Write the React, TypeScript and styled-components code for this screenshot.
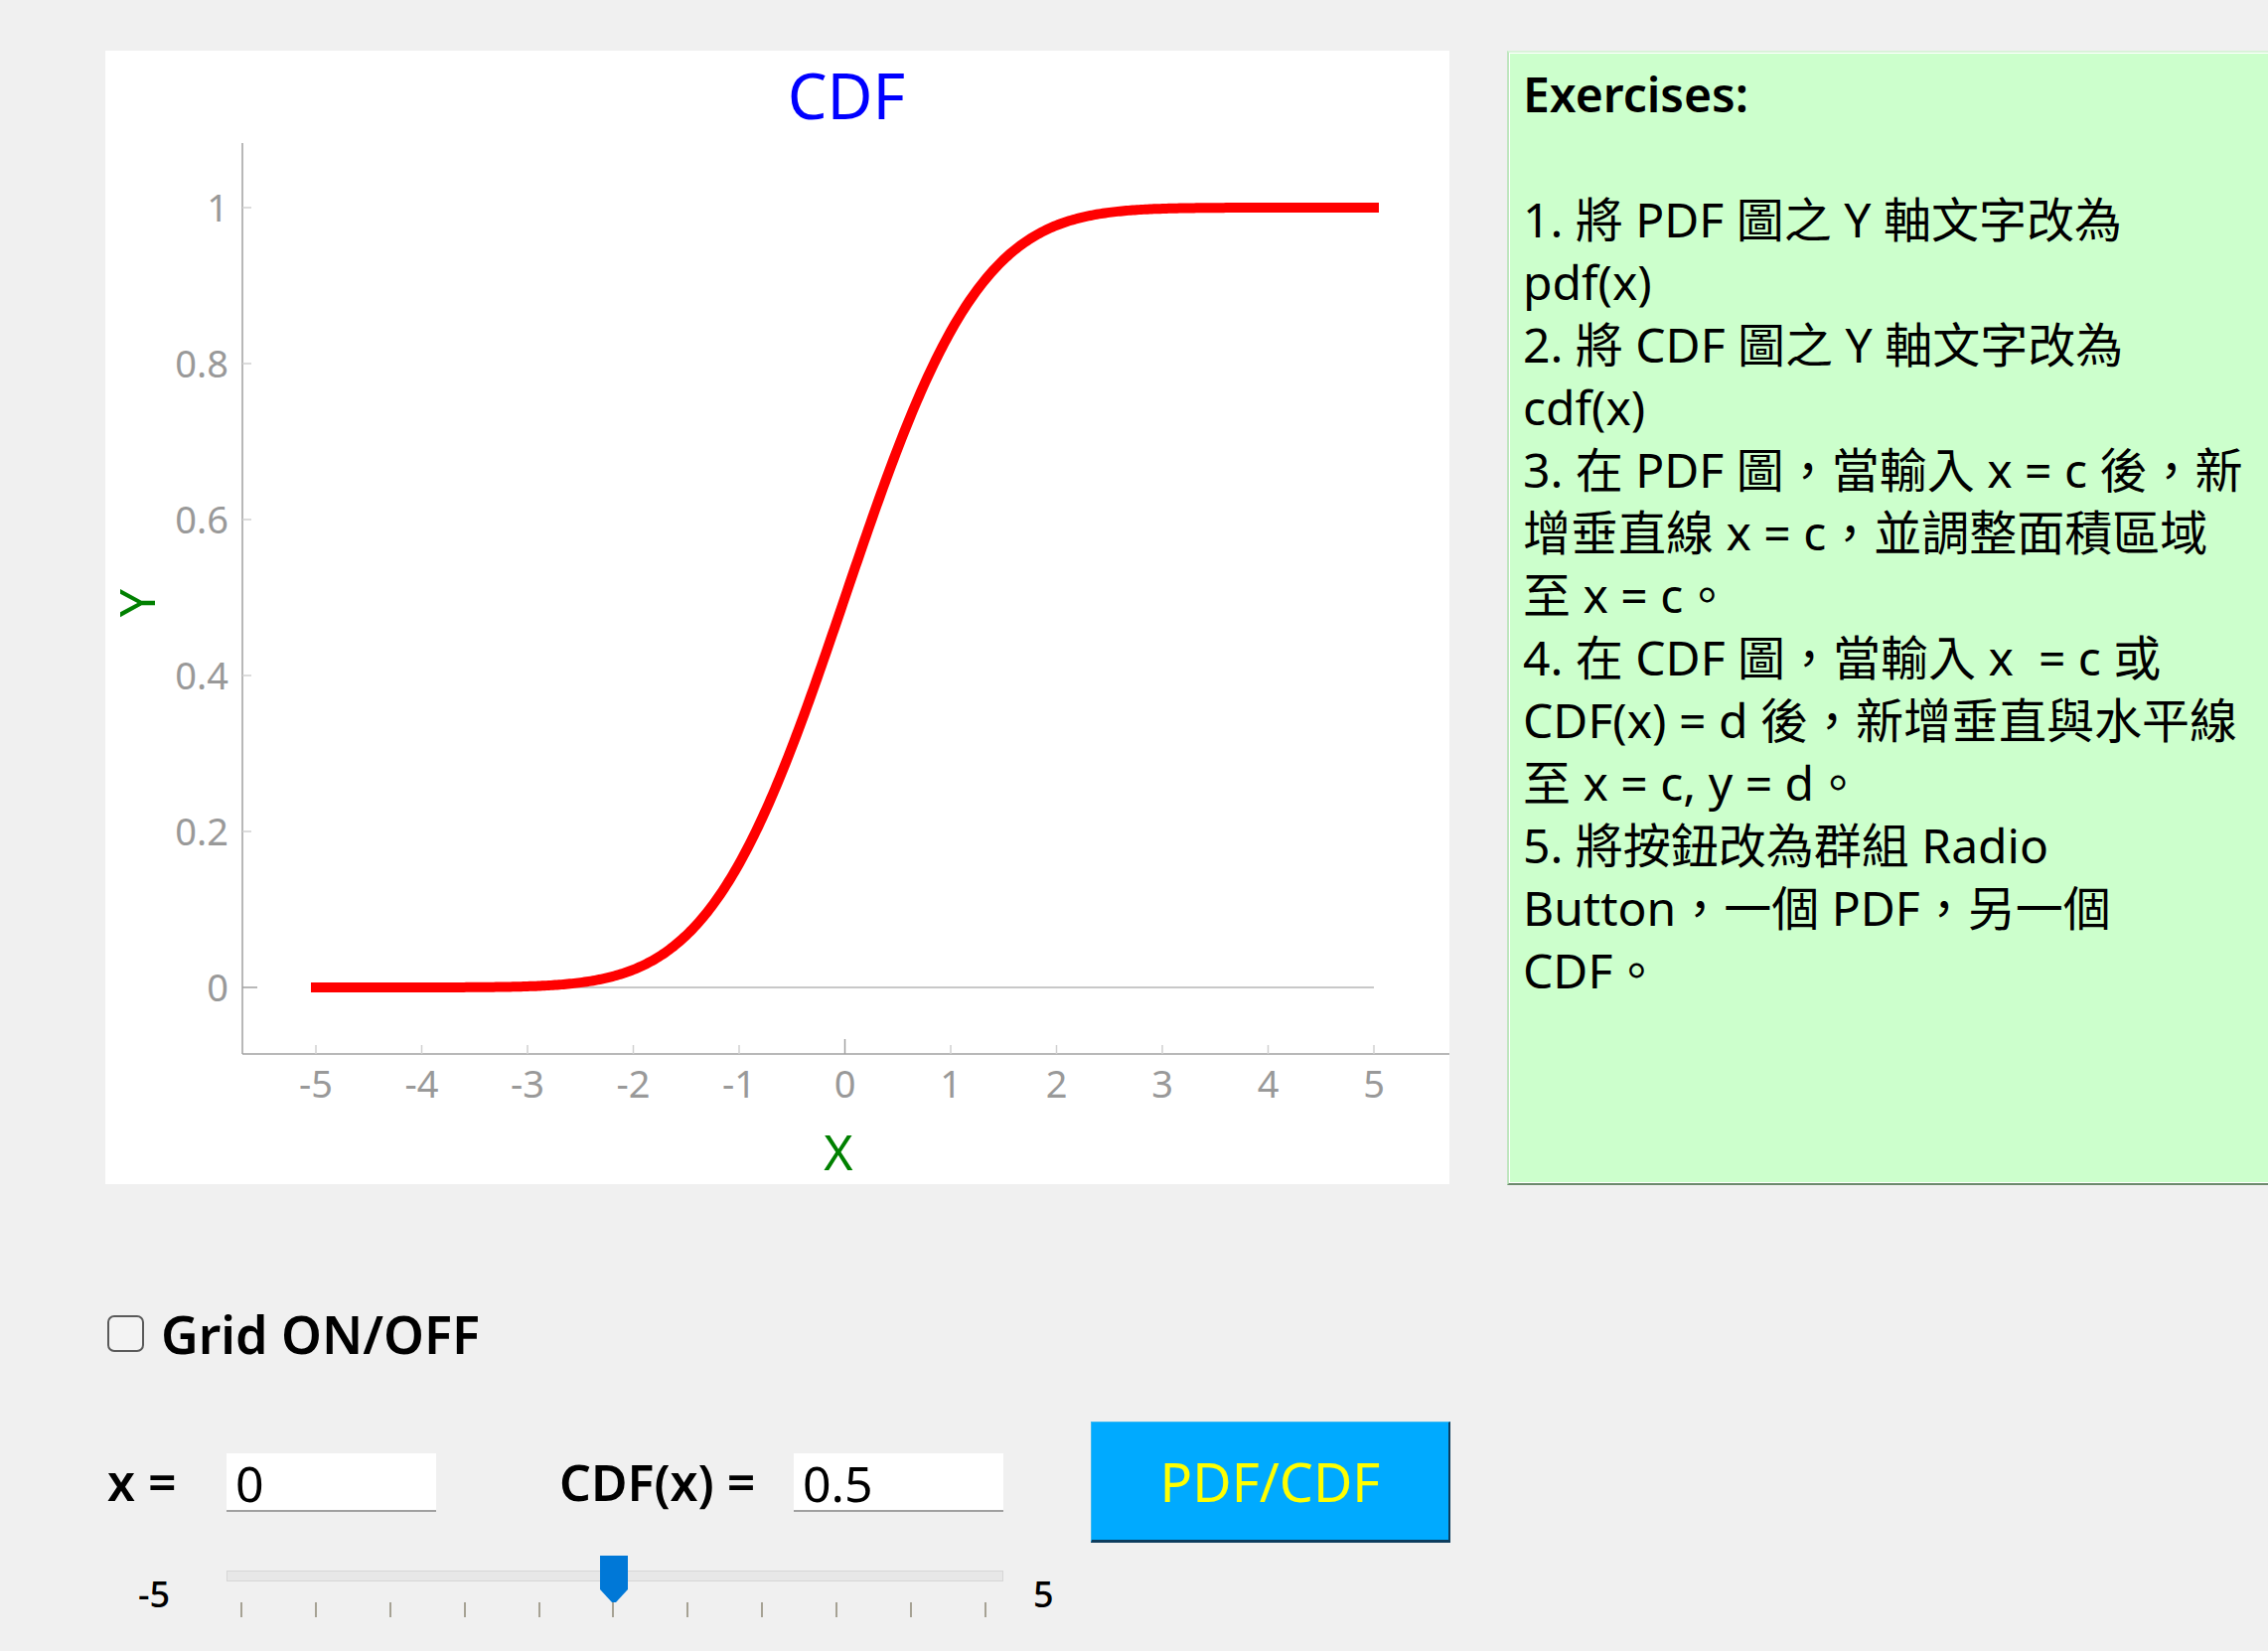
import React from "react";
import styled, { createGlobalStyle } from "styled-components";

const GlobalStyle = createGlobalStyle`
  html, body {
    margin: 0;
    padding: 0;
    background: #f0f0f0;
    overflow: hidden;
  }
  body {
    font-family: "Noto Sans", "Noto Sans CJK TC", sans-serif;
    color: #000;
  }
`;

// normal cdf, erf from Abramowitz-Stegun 7.1.26
function erf(x: number) {
  const s = x < 0 ? -1 : 1;
  const a = Math.abs(x);
  const t = 1 / (1 + 0.3275911 * a);
  const y =
    1 -
    ((((1.061405429 * t - 1.453152027) * t + 1.421413741) * t - 0.284496736) * t +
      0.254829592) *
      t *
      Math.exp(-a * a);
  return s * y;
}
const cdf = (x: number) => 0.5 * (1 + erf(x / Math.SQRT2));

// chart geometry (px inside the white panel)
const X0 = 212;
const XU = 106.5;
const Y0 = 943;
const YU = 785;
const px = (v: number) => X0 + (v + 5) * XU;
const py = (p: number) => Y0 - p * YU;

const xTicks = [-5, -4, -3, -2, -1, 0, 1, 2, 3, 4, 5];
const yTicks = [0, 0.2, 0.4, 0.6, 0.8, 1];

const curvePath = (() => {
  const pts: string[] = [];
  for (let i = 0; i <= 500; i++) {
    const v = -5 + (i * 10) / 500;
    pts.push(`${px(v).toFixed(2)},${py(cdf(v)).toFixed(2)}`);
  }
  return "M" + pts.join(" L");
})();

const Page = styled.div`
  width: 2283px;
  height: 1662px;
  box-sizing: border-box;
  padding: 51px 0 0 106px;
  overflow: hidden;
`;

const TopRow = styled.div`
  display: flex;
  gap: 58px;
  height: 1141px;
`;

const ChartPanel = styled.div`
  flex: none;
  width: 1353px;
  height: 1141px;
  background: #fff;
`;

const ExercisePanel = styled.div`
  flex: none;
  width: 800px;
  height: 1142px;
  box-sizing: border-box;
  background: #ccffcc;
  border-left: 2px solid #bfe6bf;
  border-top: 2px solid #d8f4d8;
  border-bottom: 2px solid #6d8a6d;
  box-shadow: inset 1px 1px 0 #ffffff, inset 0 -1px 0 #ffffff;
  padding: 10px 0 0 14px;
  font-size: 48px;
  line-height: 63px;
`;

const ExLine = styled.div<{ $bold?: boolean }>`
  height: 63px;
  white-space: pre;
  font-weight: ${(p) => (p.$bold ? 600 : 400)};
`;

const GridRow = styled.label`
  display: flex;
  align-items: center;
  gap: 17px;
  margin-top: 120px;
  height: 60px;
  padding-left: 2px;
  font-size: 52px;
  font-weight: 600;
`;

const CheckBox = styled.span`
  width: 37px;
  height: 37px;
  box-sizing: border-box;
  border: 2px solid #5a5a5a;
  border-radius: 7px;
  background: #f3f3f3;
`;

const ControlsRow = styled.div`
  display: flex;
  align-items: center;
  height: 122px;
  margin-top: 59px;
`;

const FieldLabel = styled.span<{ $w: number; $ml?: number }>`
  width: ${(p) => p.$w}px;
  margin-left: ${(p) => p.$ml ?? 0}px;
  padding-left: 2px;
  box-sizing: border-box;
  font-size: 50px;
  font-weight: 600;
  white-space: nowrap;
`;

const ValueBox = styled.div`
  width: 211px;
  height: 59px;
  box-sizing: border-box;
  background: #fff;
  border-bottom: 2px solid #a0a0a0;
  padding: 0 9px;
  font-size: 50px;
  line-height: 60px;
`;

const SwitchButton = styled.button`
  margin-left: 88px;
  width: 362px;
  height: 122px;
  box-sizing: border-box;
  background: #00aaff;
  color: #ffff00;
  border: none;
  border-top: 1px solid #3ab8f0;
  border-left: 1px solid #3ab8f0;
  border-right: 2px solid #0d3d5e;
  border-bottom: 3px solid #0d3d5e;
  font-family: "Noto Sans", sans-serif;
  font-size: 54px;
  padding: 0;
`;

const SliderRow = styled.div`
  display: flex;
  margin-top: 13px;
`;

const RangeLabel = styled.span<{ $w: number; $pl: number }>`
  width: ${(p) => p.$w}px;
  padding-left: ${(p) => p.$pl}px;
  box-sizing: border-box;
  margin-top: 14px;
  font-size: 36px;
  line-height: 50px;
  font-weight: 500;
`;

const SliderBox = styled.div`
  position: relative;
  width: 782px;
  height: 64px;
`;

const Track = styled.div`
  margin-top: 15px;
  height: 11px;
  box-sizing: border-box;
  background: #e7e7e7;
  border: 1px solid #d6d6d6;
`;

const TickRow = styled.div`
  display: flex;
  justify-content: space-between;
  margin-top: 21px;
  padding: 0 17px 0 14px;
`;

const Tick = styled.span`
  width: 2px;
  height: 15px;
  background: #a6a294;
`;

const Thumb = styled.svg`
  position: absolute;
  top: 0;
`;

function Chart() {
  return (
    <svg width={1353} height={1141} viewBox="0 0 1353 1141">
      <text
        x={746}
        y={69}
        textAnchor="middle"
        fontFamily="Noto Sans, sans-serif"
        fontSize={63}
        fill="#0000ff"
      >
        CDF
      </text>
      {/* axes */}
      <line x1={138} y1={93} x2={138} y2={1010} stroke="#a0a0a0" strokeWidth={1.5} />
      <line x1={138} y1={1010} x2={1353} y2={1010} stroke="#a0a0a0" strokeWidth={1.5} />
      {/* zero line */}
      <line x1={px(-5)} y1={Y0} x2={px(5)} y2={Y0} stroke="#c8c8c8" strokeWidth={2} />
      {yTicks.map((t) => (
        <g key={t}>
          <line
            x1={138}
            y1={py(t)}
            x2={t === 0 ? 153 : 147}
            y2={py(t)}
            stroke={t === 0 ? "#a0a0a0" : "#d0d0d0"}
            strokeWidth={1.5}
          />
          <text
            x={124}
            y={py(t) + 14}
            textAnchor="end"
            fontFamily="Noto Sans, sans-serif"
            fontSize={38}
            fill="#999"
          >
            {t}
          </text>
        </g>
      ))}
      {xTicks.map((t) => (
        <g key={t}>
          <line
            x1={px(t)}
            y1={1010}
            x2={px(t)}
            y2={t === 0 ? 995 : 1001}
            stroke={t === 0 ? "#a0a0a0" : "#d0d0d0"}
            strokeWidth={1.5}
          />
          <text
            x={px(t)}
            y={1054}
            textAnchor="middle"
            fontFamily="Noto Sans, sans-serif"
            fontSize={38}
            fill="#999"
          >
            {t}
          </text>
        </g>
      ))}
      <path d={curvePath} fill="none" stroke="#ff0000" strokeWidth={10} strokeLinecap="square" />
      <text
        x={738}
        y={1127}
        textAnchor="middle"
        fontFamily="Noto Sans, sans-serif"
        fontSize={50}
        fill="#008000"
      >
        X
      </text>
      <text
        x={50}
        y={556}
        textAnchor="middle"
        transform="rotate(-90 50 556)"
        fontFamily="Noto Sans, sans-serif"
        fontSize={50}
        fill="#008000"
      >
        Y
      </text>
    </svg>
  );
}

const exercises: { text: string; bold?: boolean }[] = [
  { text: "Exercises:", bold: true },
  { text: "" },
  { text: "1. 將 PDF 圖之 Y 軸文字改為" },
  { text: "pdf(x)" },
  { text: "2. 將 CDF 圖之 Y 軸文字改為" },
  { text: "cdf(x)" },
  { text: "3. 在 PDF 圖，當輸入 x = c 後，新" },
  { text: "增垂直線 x = c，並調整面積區域" },
  { text: "至 x = c。" },
  { text: "4. 在 CDF 圖，當輸入 x  = c 或" },
  { text: "CDF(x) = d 後，新增垂直與水平線" },
  { text: "至 x = c, y = d。" },
  { text: "5. 將按鈕改為群組 Radio" },
  { text: "Button，一個 PDF，另一個" },
  { text: "CDF。" },
];

export default function App() {
  const min = -5;
  const max = 5;
  const x = 0;
  const thumbLeft = 15 + ((x - min) / (max - min)) * 750 - 14;

  return (
    <>
      <GlobalStyle />
      <Page>
        <TopRow>
          <ChartPanel>
            <Chart />
          </ChartPanel>
          <ExercisePanel>
            {exercises.map((l, i) => (
              <ExLine key={i} $bold={l.bold}>
                {l.text}
              </ExLine>
            ))}
          </ExercisePanel>
        </TopRow>

        <GridRow>
          <CheckBox />
          Grid ON/OFF
        </GridRow>

        <ControlsRow>
          <FieldLabel $w={122}>x =</FieldLabel>
          <ValueBox>0</ValueBox>
          <FieldLabel $w={238} $ml={122}>
            CDF(x) =
          </FieldLabel>
          <ValueBox>0.5</ValueBox>
          <SwitchButton>PDF/CDF</SwitchButton>
        </ControlsRow>

        <SliderRow>
          <RangeLabel $w={122} $pl={33}>
            -5
          </RangeLabel>
          <SliderBox>
            <Track />
            <TickRow>
              {Array.from({ length: 11 }).map((_, i) => (
                <Tick key={i} />
              ))}
            </TickRow>
            <Thumb width={28} height={48} viewBox="0 0 28 48" style={{ left: thumbLeft }}>
              <polygon points="0,0 28,0 28,34 16,47 12,47 0,34" fill="#0078d7" />
            </Thumb>
          </SliderBox>
          <RangeLabel $w={60} $pl={30}>
            5
          </RangeLabel>
        </SliderRow>
      </Page>
    </>
  );
}
